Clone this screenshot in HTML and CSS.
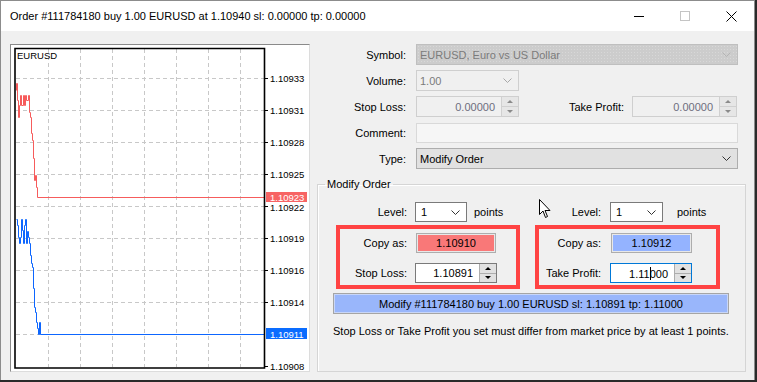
FILE: index.html
```html
<!DOCTYPE html>
<html lang="en">
<head>
  <meta charset="UTF-8" />
  <title>Order #111784180</title>
  <link rel="stylesheet" href="styles.css">
</head>
<body>

  <div class="window">

    <!-- Title bar -->
    <div class="titlebar">
      <span class="title">Order #111784180 buy 1.00 EURUSD at 1.10940 sl: 0.00000 tp: 0.00000</span>
      <div class="controls">
        <span class="ctl"><svg width="10" height="10"><line x1="0" y1="5.5" x2="10" y2="5.5" stroke="#000" stroke-width="1"/></svg></span>
        <span class="ctl"><svg width="10" height="10"><rect x="0.5" y="0.5" width="9" height="9" fill="none" stroke="#c4c4c4"/></svg></span>
        <span class="ctl"><svg width="11" height="11"><path d="M0.5 0.5 L10.5 10.5 M10.5 0.5 L0.5 10.5" stroke="#000" stroke-width="1"/></svg></span>
      </div>
    </div>

    <div class="content">

      <!-- Chart -->
      <div class="chart-frame">
        <svg class="chart" width="298" height="326" viewBox="0 0 298 326">
          <g class="grid">
            <line x1="37.5" y1="4" x2="37.5" y2="322"/>
            <line x1="69.5" y1="4" x2="69.5" y2="322"/>
            <line x1="101.5" y1="4" x2="101.5" y2="322"/>
            <line x1="133.5" y1="4" x2="133.5" y2="322"/>
            <line x1="165.5" y1="4" x2="165.5" y2="322"/>
            <line x1="197.5" y1="4" x2="197.5" y2="322"/>
            <line x1="229.5" y1="4" x2="229.5" y2="322"/>
            <line x1="5" y1="33.5" x2="253" y2="33.5"/>
            <line x1="5" y1="65.5" x2="253" y2="65.5"/>
            <line x1="5" y1="97.5" x2="253" y2="97.5"/>
            <line x1="5" y1="129.5" x2="253" y2="129.5"/>
            <line x1="5" y1="161.5" x2="253" y2="161.5"/>
            <line x1="5" y1="193.5" x2="253" y2="193.5"/>
            <line x1="5" y1="225.5" x2="253" y2="225.5"/>
            <line x1="5" y1="257.5" x2="253" y2="257.5"/>
            <line x1="5" y1="289.5" x2="253" y2="289.5"/>
          </g>

          <polyline class="ask" points="5.5,45.5 5.5,38.5 6.5,38.5 6.5,55.5 7.5,55.5 7.5,72.5 8.5,72.5 8.5,60.5 9.5,60.5 9.5,50.5 10.5,50.5 10.5,60.5 12.5,60.5 12.5,50.5 13.5,50.5 13.5,60.5 14.5,60.5 14.5,50.5 15.5,50.5 15.5,55.5 17.5,55.5 17.5,50.5 18.5,50.5 18.5,67.5 19.5,67.5 19.5,72.5 20.5,72.5 20.5,88.5 21.5,88.5 21.5,95.5 22.5,95.5 22.5,113.5 23.5,113.5 23.5,135.5 24.5,135.5 24.5,130.5 25.5,130.5 25.5,142.5 26.5,142.5 26.5,152.5 253,152.5"/>
          <polyline class="bid" points="5.5,174.5 6.5,174.5 6.5,180.5 7.5,180.5 7.5,192.5 8.5,192.5 8.5,198.5 9.5,198.5 9.5,192.5 10.5,192.5 10.5,174.5 11.5,174.5 11.5,185.5 12.5,185.5 12.5,198.5 13.5,198.5 13.5,180.5 14.5,180.5 14.5,174.5 15.5,174.5 15.5,198.5 16.5,198.5 16.5,186.5 17.5,186.5 17.5,192.5 18.5,192.5 18.5,198.5 19.5,198.5 19.5,210.5 20.5,210.5 20.5,218.5 21.5,218.5 21.5,222.5 22.5,222.5 22.5,243.5 23.5,243.5 23.5,262.5 24.5,262.5 24.5,267.5 25.5,267.5 25.5,277.5 26.5,277.5 26.5,283.5 27.5,283.5 27.5,289.5 28.5,289.5 28.5,277.5 29.5,277.5 29.5,289.5 253,289.5"/>

          <path class="axis" d="M4 3.5 H253.5 V323 H4 Z"/>

          <g class="ticks">
            <line x1="254" y1="33.5" x2="257" y2="33.5"/>
            <line x1="254" y1="65.5" x2="257" y2="65.5"/>
            <line x1="254" y1="97.5" x2="257" y2="97.5"/>
            <line x1="254" y1="129.5" x2="257" y2="129.5"/>
            <line x1="254" y1="161.5" x2="257" y2="161.5"/>
            <line x1="254" y1="193.5" x2="257" y2="193.5"/>
            <line x1="254" y1="225.5" x2="257" y2="225.5"/>
            <line x1="254" y1="257.5" x2="257" y2="257.5"/>
            <line x1="254" y1="321.5" x2="257" y2="321.5"/>
          </g>

          <text class="sym" x="6" y="14">EURUSD</text>
          <g class="prices">
            <text x="259" y="37">1.10933</text>
            <text x="259" y="69">1.10931</text>
            <text x="259" y="101">1.10928</text>
            <text x="259" y="133">1.10925</text>
            <text x="259" y="166">1.10922</text>
            <text x="259" y="197">1.10919</text>
            <text x="259" y="229">1.10916</text>
            <text x="259" y="261">1.10914</text>
            <text x="259" y="325">1.10908</text>
          </g>
          <rect class="ask-tag" x="255" y="147" width="41" height="10"/>
          <text class="tag-text" x="259" y="155.5">1.10923</text>
          <rect class="bid-tag" x="255" y="283" width="41" height="11"/>
          <text class="tag-text" x="259" y="292.5">1.10911</text>
        </svg>
      </div>

      <!-- Order form -->
      <div class="form">
        <div class="row">
          <span class="lbl">Symbol:</span>
          <div class="box combo off w-full">
            <span class="val">EURUSD, Euro vs US Dollar</span>
            <svg class="chev" width="9" height="5"><path d="M0.5 0.5 L4.5 4.5 L8.5 0.5" fill="none" stroke="#b4b4b4"/></svg>
          </div>
        </div>

        <div class="row">
          <span class="lbl">Volume:</span>
          <div class="box edit-off w-short">
            <span class="val">1.00</span>
            <svg class="chev" width="9" height="5"><path d="M0.5 0.5 L4.5 4.5 L8.5 0.5" fill="none" stroke="#a8a8a8"/></svg>
          </div>
        </div>

        <div class="row">
          <span class="lbl">Stop Loss:</span>
          <div class="box edit-off w-short num">
            <span class="val">0.00000</span>
            <span class="spin dim"><i class="up"></i><i class="down"></i></span>
          </div>
          <span class="lbl tp-lbl">Take Profit:</span>
          <div class="box edit-off w-tp num">
            <span class="val">0.00000</span>
            <span class="spin dim"><i class="up"></i><i class="down"></i></span>
          </div>
        </div>

        <div class="row">
          <span class="lbl">Comment:</span>
          <div class="box comment w-full"></div>
        </div>

        <div class="row type-row">
          <span class="lbl">Type:</span>
          <div class="box combo w-full">
            <span class="val dark">Modify Order</span>
            <svg class="chev" width="9" height="5"><path d="M0.5 0.5 L4.5 4.5 L8.5 0.5" fill="none" stroke="#333"/></svg>
          </div>
        </div>

        <fieldset class="group">
          <legend>Modify Order</legend>

          <div class="halves">
            <div class="half half-sl">
              <div class="level">
                <span class="lbl">Level:</span>
                <div class="box pick">
                  <span class="val dark">1</span>
                  <svg class="chev" width="9" height="5"><path d="M0.5 0.5 L4.5 4.5 L8.5 0.5" fill="none" stroke="#333"/></svg>
                </div>
                <span class="pts">points</span>
              </div>
              <div class="mark">
                <div class="mrow">
                  <span class="lbl">Copy as:</span>
                  <div class="copy copy-red">1.10910</div>
                </div>
                <div class="mrow">
                  <span class="lbl">Stop Loss:</span>
                  <div class="box edit num">
                    <span class="val dark">1.10891</span>
                    <span class="spin"><i class="up"></i><i class="down"></i></span>
                  </div>
                </div>
              </div>
            </div>

            <div class="half half-tp">
              <div class="level">
                <span class="lbl">Level:</span>
                <div class="box pick">
                  <span class="val dark">1</span>
                  <svg class="chev" width="9" height="5"><path d="M0.5 0.5 L4.5 4.5 L8.5 0.5" fill="none" stroke="#333"/></svg>
                </div>
                <span class="pts">points</span>
              </div>
              <div class="mark">
                <div class="mrow">
                  <span class="lbl">Copy as:</span>
                  <div class="copy copy-blue">1.10912</div>
                </div>
                <div class="mrow">
                  <span class="lbl">Take Profit:</span>
                  <div class="box edit num focus">
                    <span class="val dark">1.11<span class="caret"></span>000</span>
                    <span class="spin"><i class="up"></i><i class="down"></i></span>
                  </div>
                </div>
              </div>
            </div>
          </div>

          <div class="modify">Modify #111784180 buy 1.00 EURUSD sl: 1.10891 tp: 1.11000</div>
          <p class="note">Stop Loss or Take Profit you set must differ from market price by at least 1 points.</p>
        </fieldset>
      </div>

    </div>

    <!-- mouse pointer -->
    <svg class="pointer" width="13" height="20" viewBox="0 0 13 20">
      <path d="M0.5 0.5 L0.5 15.5 L4 12 L6.5 18.5 L8.5 17.5 L6 11.5 L11 11.5 Z" fill="#fff" stroke="#000" stroke-width="1"/>
    </svg>
  </div>

</body>
</html>
```

FILE: styles.css
```css
body {
  margin: 0;
  background: #2a2a2a;
  font-family: "Liberation Sans", Arial, sans-serif;
  font-size: 11px;
  color: #000;
}

.window {
  position: relative;
  width: 753px;
  height: 379px;
  background: #f0f0f0;
  border: 1px solid #8c8c8c;
  border-bottom: none;
}

/* Title bar */
.titlebar {
  height: 30px;
  background: #fff;
  display: flex;
  align-items: center;
  justify-content: space-between;
}

.title {
  margin-left: 9px;
  font-size: 11px;
}

.controls {
  display: flex;
  height: 30px;
}

.ctl {
  width: 46px;
  display: flex;
  align-items: center;
  justify-content: center;
}

/* Layout */
.content {
  display: flex;
  padding: 13px 0 0 9px;
}

.chart-frame {
  width: 298px;
  height: 326px;
  background: #fff;
  border-top: 1px solid #8a8a8a;
  border-left: 1px solid #8a8a8a;
  border-bottom: 1px solid #dcdcdc;
  border-right: 1px solid #dcdcdc;
}

.chart {
  display: block;
  font-family: "Liberation Sans", Arial, sans-serif;
}

.grid line {
  stroke: #c8c8c8;
  stroke-width: 1;
  stroke-dasharray: 4 3;
}

.axis {
  fill: none;
  stroke: #000;
  stroke-width: 1.6;
}

.ticks line {
  stroke: #000;
  stroke-width: 1;
}

.ask, .bid {
  fill: none;
  stroke-width: 1;
}

.ask { stroke: #f65c5c; }
.bid { stroke: #0d66ff; }

.sym {
  font-size: 9.5px;
  fill: #000;
}

.prices text {
  font-size: 9.5px;
  fill: #000;
}

.ask-tag { fill: #f76464; }
.bid-tag { fill: #0a6cff; }

.tag-text {
  font-size: 9.5px;
  fill: #fff;
}

/* Form */
.form {
  margin-left: 7px;
  width: 429px;
}

.row {
  display: flex;
  align-items: center;
  height: 21px;
  margin-bottom: 5px;
}

.type-row {
  margin-top: 1px;
  margin-bottom: 0;
}

.lbl {
  width: 89px;
  text-align: right;
  margin-right: 10px;
  white-space: nowrap;
}

.tp-lbl {
  width: 105px;
  margin-right: 8px;
}

.box {
  box-sizing: border-box;
  height: 21px;
  display: flex;
  align-items: center;
  justify-content: space-between;
  border: 1px solid #b9b9b9;
  padding: 0 0 0 3px;
  overflow: hidden;
}

.val {
  color: #7b7b7b;
  white-space: nowrap;
}

.val.dark { color: #000; }

.chev {
  margin-right: 6px;
  flex: none;
}

.w-full { width: 322px; }
.w-short { width: 103px; }
.w-tp { width: 105px; }

.combo {
  background: #e1e1e1;
  border-color: #adadad;
}

.combo.off {
  background-color: #cccccc;
  background-image: radial-gradient(#d8d8d8 0.6px, transparent 0.7px);
  background-size: 3px 3px;
  border-color: #bfbfbf;
}

.edit-off {
  background: #f0f0f0;
  border-color: #cfcfcf;
}

.comment {
  height: 20px;
  background: #f6f6f6;
  border-color: #d9d9d9;
}

.num .val {
  flex: 1;
  text-align: right;
  padding-right: 6px;
}

.edit-off.num .val { color: #6e6e7e; }

/* Spinner */
.spin {
  align-self: stretch;
  width: 16px;
  flex: none;
  display: flex;
  flex-direction: column;
  background: #e6e6e6;
  border-left: 1px solid #d0d0d0;
}

.spin i {
  flex: 1;
  display: flex;
  align-items: center;
  justify-content: center;
}

.spin i::after {
  content: "";
  border-left: 3px solid transparent;
  border-right: 3px solid transparent;
}

.spin .up { border-bottom: 1px solid #d0d0d0; }
.spin .up::after { border-bottom: 3px solid #000; }
.spin .down::after { border-top: 3px solid #000; }
.spin.dim .up::after { border-bottom-color: #8a8a8a; }
.spin.dim .down::after { border-top-color: #8a8a8a; }

/* Modify Order group */
.group {
  box-sizing: border-box;
  width: 429px;
  margin: 8px 0 0 0;
  padding: 0 0 33px 0;
  border: 1px solid #d5d5d5;
  box-shadow: inset 1px 1px #fff;
}

.group legend {
  margin-left: 7px;
  padding: 0 2px;
  line-height: 14px;
}

.halves {
  display: flex;
  margin: 11px 0 0 18px;
}

.half-sl { width: 184px; }
.half-tp { width: 185px; margin-left: 15px; }

.level {
  display: flex;
  align-items: center;
  height: 20px;
}

.level .lbl { margin-right: 8px; }
.half-sl .level .lbl { width: 71px; }
.half-tp .level .lbl { width: 66px; margin-right: 9px; }

.pick {
  height: 20px;
  width: 52px;
  background: #fff;
  border-color: #7a7a7a;
  padding-left: 5px;
}

.half-tp .pick { width: 53px; }

.pts { margin-left: 7px; }
.half-tp .pts { margin-left: 14px; }

.mark {
  margin-top: 3px;
  border: 4px solid #ff4343;
  padding: 4px 0 2px;
}

.mrow {
  display: flex;
  align-items: center;
  height: 20px;
}

.mrow + .mrow { margin-top: 10px; }

.half-sl .mrow .lbl { width: 67px; margin-right: 8px; }
.half-tp .mrow .lbl { width: 62px; margin-right: 9px; }

.copy {
  box-sizing: border-box;
  height: 20px;
  width: 80px;
  margin-left: 1px;
  display: flex;
  align-items: center;
  justify-content: center;
  border: 1px solid #adadad;
  box-shadow: inset 0 0 0 1px #e8e8e8;
}

.half-tp .copy { width: 81px; }

.copy-red { background: #f97878; }
.copy-blue { background: #94b3ff; }

.edit {
  height: 20px;
  width: 82px;
  background: #fff;
  border-color: #7a7a7a;
}

.edit .spin {
  background: #e1e1e1;
  border-left: 1px solid #adadad;
}

.edit .spin .up { border-bottom-color: #adadad; }

.focus { border-color: #0078d7; }

.caret {
  display: inline-block;
  width: 1px;
  height: 13px;
  margin: 0 -1px 0 0;
  background: #000;
  vertical-align: -2px;
}

.modify {
  box-sizing: border-box;
  height: 21px;
  width: 396px;
  margin: 4px 0 0 15px;
  display: flex;
  align-items: center;
  justify-content: center;
  background: #99b6fb;
  border: 1px solid #a5a5a5;
  box-shadow: inset 0 0 0 1px #c8d6f8;
}

.note {
  margin: 10px 0 0 15px;
  line-height: 14px;
  white-space: nowrap;
}

/* mouse pointer over the dialog */
.pointer {
  position: absolute;
  left: 538px;
  top: 198px;
}
```
